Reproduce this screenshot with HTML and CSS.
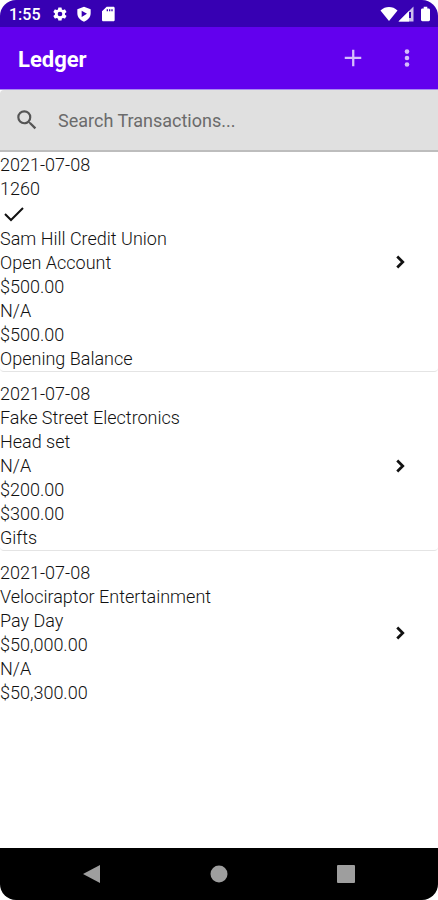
FILE: index.html
```
<!DOCTYPE html>
<html lang="en">
<head>
    <meta charset="UTF-8">
    <meta name="viewport" content="width=device-width, initial-scale=1.0">
    <title>Ledger</title>
    <link rel="stylesheet" href="styles.css">
</head>
<body>
    <div class="screen">
        <!-- Status bar -->
        <div class="status-bar">
            <span class="clock">1:55</span>
            <svg class="status-icon" viewBox="0 0 24 24"><path d="M19.4 13a7.500 7.500 0 0 0 0-2l2.100-1.600c.2-.1.200-.4.100-.6l-2-3.500c-.1-.2-.4-.3-.6-.2l-2.500 1a7.300 7.300 0 0 0-1.700-1l-.4-2.600a.5.500 0 0 0-.5-.4h-4a.5.500 0 0 0-.5.400L9 5.100a7.700 7.700 0 0 0-1.700 1l-2.500-1c-.2-.1-.5 0-.6.200l-2 3.500c-.1.200-.1.500.1.600L4.400 11a7.900 7.900 0 0 0 0 2l-2.100 1.600c-.2.100-.2.400-.1.600l2 3.500c.1.200.4.300.6.200l2.500-1c.5.400 1.100.8 1.700 1l.4 2.600c0 .2.200.4.500.4h4c.3 0 .5-.2.500-.4l.4-2.600a7.300 7.300 0 0 0 1.700-1l2.500 1c.2.100.5 0 .6-.2l2-3.500c.1-.2.100-.5-.1-.6zM12 15.500a3.500 3.500 0 1 1 0-7 3.500 3.500 0 0 1 0 7z"/></svg>
            <svg class="status-icon" viewBox="0 0 24 24"><path fill-rule="evenodd" d="M12 1l10 4v6c0 5.500-4 10.500-10 12.500C6 21.500 2 16.500 2 11V5zM8.500 7v9.500l8-4.700z"/></svg>
            <svg class="status-icon" viewBox="0 0 24 24"><path fill-rule="evenodd" d="M10 1h10c1.100 0 2 .9 2 2v18c0 1.100-.9 2-2 2H5c-1.100 0-2-.9-2-2V8zM10 5v3h2V5zM13.500 5v3h2V5zM17 5v3h2V5z"/></svg>
            <div class="signals">
                <svg class="wifi" viewBox="0 0 18 16"><path d="M9 15L.5 4.500C3 2 6 1 9 1s6 1 8.500 3.500z"/></svg>
                <svg class="cell" viewBox="0 0 16 16"><path fill-opacity=".75" d="M15.500.5v15H.5z"/><path d="M11 5v10.500H.5z"/><path class="cell-mark" d="M11 6h2v6h-2z"/></svg>
                <svg class="battery" viewBox="0 0 10 16"><path d="M3 0h4v2h1.500c.8 0 1.500.7 1.500 1.500v11c0 .8-.7 1.500-1.500 1.500h-7C.7 16 0 15.300 0 14.500v-11C0 2.700.7 2 1.500 2H3z"/></svg>
            </div>
        </div>

        <!-- App bar -->
        <header class="app-bar">
            <h1>Ledger</h1>
            <button class="icon-button" type="button" aria-label="Add transaction">
                <svg viewBox="0 0 24 24"><path d="M11 3h2.500v7.500H21V13h-7.500v8H11v-8H3v-2.500h8z"/></svg>
            </button>
            <button class="icon-button" type="button" aria-label="More options">
                <svg viewBox="0 0 24 24"><circle cx="12" cy="5" r="2.500"/><circle cx="12" cy="12" r="2.500"/><circle cx="12" cy="19" r="2.500"/></svg>
            </button>
        </header>

        <!-- Search -->
        <form class="search">
            <label for="search" aria-label="Search Transactions">
                <svg viewBox="0 0 24 24"><path d="M15.500 14h-.79l-.28-.27A6.470 6.470 0 0 0 16 9.500 6.500 6.500 0 1 0 9.500 16c1.610 0 3.090-.59 4.230-1.570l.27.280v.79l5 4.990L20.490 19zm-6 0a4.500 4.500 0 1 1 0-9 4.500 4.500 0 0 1 0 9z"/></svg>
            </label>
            <input type="text" id="search" placeholder="Search Transactions...">
        </form>

        <!-- Transactions -->
        <main class="transactions">
            <a class="transaction" href="#">
                <div class="details">
                    <p>2021-07-08</p>
                    <p>1260</p>
                    <svg class="check" viewBox="0 0 26 26"><path d="M5 13l6 6L23 7"/></svg>
                    <p>Sam Hill Credit Union</p>
                    <p>Open Account</p>
                    <p>$500.00</p>
                    <p>N/A</p>
                    <p>$500.00</p>
                    <p>Opening Balance</p>
                </div>
                <svg class="chevron" viewBox="0 0 24 24"><path d="M9 6l6 6-6 6"/></svg>
            </a>
            <a class="transaction" href="#">
                <div class="details">
                    <p>2021-07-08</p>
                    <p>Fake Street Electronics</p>
                    <p>Head set</p>
                    <p>N/A</p>
                    <p>$200.00</p>
                    <p>$300.00</p>
                    <p>Gifts</p>
                </div>
                <svg class="chevron" viewBox="0 0 24 24"><path d="M9 6l6 6-6 6"/></svg>
            </a>
            <a class="transaction" href="#">
                <div class="details">
                    <p>2021-07-08</p>
                    <p>Velociraptor Entertainment</p>
                    <p>Pay Day</p>
                    <p>$50,000.00</p>
                    <p>N/A</p>
                    <p>$50,300.00</p>
                </div>
                <svg class="chevron" viewBox="0 0 24 24"><path d="M9 6l6 6-6 6"/></svg>
            </a>
        </main>

        <!-- Navigation bar -->
        <nav class="nav-bar">
            <button type="button" aria-label="Back">
                <svg viewBox="0 0 18 18"><path d="M17 0v18L0 9z"/></svg>
            </button>
            <button type="button" aria-label="Home">
                <svg viewBox="0 0 18 18"><circle cx="9" cy="9" r="8.500"/></svg>
            </button>
            <button type="button" aria-label="Recent apps">
                <svg viewBox="0 0 18 18"><rect width="18" height="18" rx="1"/></svg>
            </button>
        </nav>
    </div>
</body>
</html>
```
FILE: styles.css
```
* {
    box-sizing: border-box;
}

body {
    margin: 0;
    font-family: Roboto, sans-serif;
    background-color: #fff;
    color: #111;
}

button {
    padding: 0;
    border: none;
    background: none;
    cursor: pointer;
}

svg {
    display: block;
    flex: none;
}

.screen {
    display: flex;
    flex-direction: column;
    min-height: 100vh;
    border-radius: 16px;
    overflow: hidden;
}

.status-bar {
    display: flex;
    align-items: center;
    gap: 8px;
    padding: 1px 8px 0 9px;
    height: 27px;
    background-color: #3700b3;
    color: #fff;
    fill: #fff;
}

.clock {
    margin-right: 3px;
    font-size: 16px;
    font-weight: 500;
}

.status-icon {
    width: 16px;
    height: 16px;
}

.signals {
    display: flex;
    align-items: center;
    margin-left: auto;
}

.wifi {
    width: 18px;
    height: 16px;
}

.cell {
    width: 16px;
    height: 16px;
}

.cell-mark {
    fill: #3700b3;
}

.battery {
    width: 9px;
    height: 16px;
    margin-left: 7px;
}

.app-bar {
    display: flex;
    align-items: center;
    height: 63px;
    padding: 0 16px 0 18px;
    border-bottom: 1px solid #a98af0;
    background-color: #6200ee;
    color: #fff;
}

.app-bar h1 {
    flex: 1;
    margin: 2px 0 0;
    font-size: 22px;
    font-weight: 700;
}

.icon-button {
    margin-left: 24px;
    padding: 0 4px;
}

.icon-button svg {
    width: 22px;
    height: 22px;
    fill: #d5bdfb;
}

.search {
    display: flex;
    align-items: center;
    height: 62px;
    padding-left: 14px;
    border-bottom: 2px solid #bdbdbd;
    border-top-left-radius: 4px;
    background-color: #e0e0e0;
}

.search svg {
    width: 26px;
    height: 26px;
    fill: #555;
}

.search input {
    flex: 1;
    min-width: 0;
    padding: 0 18px;
    border: none;
    outline: none;
    background: none;
    font-family: inherit;
    font-size: 18px;
    color: #111;
}

.search input::placeholder {
    color: #6b6b6b;
    opacity: 1;
}

.transactions {
    flex: 1;
    padding-top: 1px;
}

.transaction {
    display: flex;
    align-items: center;
    justify-content: space-between;
    margin-bottom: 10px;
    padding-right: 27px;
    border-bottom: 1px solid #e4e4e4;
    border-radius: 4px;
    font-size: 18px;
    font-weight: 300;
    line-height: 24px;
    color: inherit;
    text-decoration: none;
}

.transaction:last-child {
    border-bottom-color: transparent;
}

.details p {
    margin: 0;
}

.check,
.chevron {
    fill: none;
    stroke: #111;
    stroke-width: 2;
}

.check {
    width: 26px;
    height: 26px;
}

.chevron {
    width: 22px;
    height: 22px;
    stroke-width: 3;
}

.nav-bar {
    display: flex;
    align-items: center;
    justify-content: space-between;
    height: 52px;
    padding: 0 83px;
    background-color: #000;
}

.nav-bar svg {
    width: 18px;
    height: 18px;
    fill: #9e9e9e;
}
```
